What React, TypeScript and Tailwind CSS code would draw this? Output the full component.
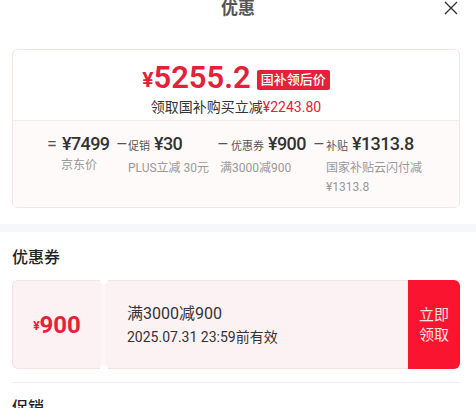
const font = "font-['Roboto','Noto_Sans_CJK_SC',sans-serif]";

const Breakdown = () => (
  <div className="flex bg-[#fffafa] pl-[34px] pt-[11px] pb-[10px]">
    {/* 京东价 */}
    <div className="flex w-[69px] flex-col">
      <div className="flex items-baseline leading-[24px]">
        <span className="w-[15px] text-[18px] text-[#555]">=</span>
        <span className="text-[18px] font-medium tracking-[-0.6px] text-[#333]">¥7499</span>
      </div>
      <span className="ml-[14px] text-[12px] leading-[19px] text-[#999]">京东价</span>
    </div>
    {/* 促销 */}
    <div className="flex w-[101px] flex-col">
      <div className="flex items-baseline leading-[24px]">
        <span className="w-[12px] text-[18px] text-[#555]">–</span>
        <span className="mr-[4px] text-[11px] text-[#555]">促销</span>
        <span className="text-[18px] font-medium tracking-[-0.6px] text-[#333]">¥30</span>
      </div>
      <span className="ml-[12px] text-[12px] leading-[19px] text-[#999]">PLUS立减 30元</span>
    </div>
    {/* 优惠券 */}
    <div className="flex w-[96px] flex-col">
      <div className="flex items-baseline leading-[24px]">
        <span className="w-[14px] text-[18px] text-[#555]">–</span>
        <span className="mr-[4px] text-[11px] text-[#555]">优惠券</span>
        <span className="text-[18px] font-medium tracking-[-0.6px] text-[#333]">¥900</span>
      </div>
      <span className="ml-[3px] text-[12px] leading-[19px] text-[#999]">满3000减900</span>
    </div>
    {/* 补贴 */}
    <div className="flex flex-1 flex-col">
      <div className="flex items-baseline leading-[24px]">
        <span className="w-[13px] text-[18px] text-[#555]">–</span>
        <span className="mr-[4px] text-[11px] text-[#555]">补贴</span>
        <span className="text-[18px] font-medium tracking-[-0.6px] text-[#333]">¥1313.8</span>
      </div>
      <span className="ml-[13px] w-[100px] text-[12px] leading-[19px] text-[#999]">国家补贴云闪付减¥1313.8</span>
    </div>
  </div>
);

const CouponCard = () => (
  <div className="relative flex h-[89px]">
    <div className="flex w-[89px] items-center justify-center rounded-l-[6px] border border-r-0 border-[#f6e4e4] bg-[#fdf2f3] text-[#e4213a]">
      <span className="mt-[3px] text-[12px] font-bold">¥</span>
      <span className="text-[24px] font-bold leading-none">900</span>
    </div>
    <div className="w-[4px] border-y border-[#f8eaea] bg-[#fdf7f8]" />
    <div className="flex flex-1 flex-col justify-center border border-l-0 border-r-0 border-[#f6e4e4] bg-[#fdf2f3] pl-[22px]">
      <span className="text-[16px] leading-[22px] text-[#333]">满3000减900</span>
      <span className="mt-[2px] text-[14px] leading-[20px] text-[#333]">2025.07.31 23:59前有效</span>
    </div>
    <div className="flex w-[52px] items-center justify-center rounded-r-[6px] bg-[#fa1430] text-center text-[15px] leading-[20px] text-[#ffe4e4]">
      立即
      <br />
      领取
    </div>
    <span className="absolute left-[88px] top-[-4px] h-[8px] w-[8px] rounded-full bg-white" />
    <span className="absolute bottom-[-4px] left-[88px] h-[8px] w-[8px] rounded-full bg-white" />
  </div>
);

export default function App() {
  return (
    <div className={`${font} h-[408px] w-[476px] overflow-hidden bg-white`}>
      {/* Header */}
      <div className="relative flex h-[16px] items-center justify-center">
        <span className="text-[17px] font-bold leading-[16px] text-[#555]">优惠</span>
        <svg
          className="absolute right-[18px] top-[1px] h-[14px] w-[14px] text-[#333]"
          viewBox="0 0 14 14"
          fill="none"
          stroke="currentColor"
          strokeWidth={1.4}
        >
          <path d="M1 1 13 13M13 1 1 13" />
        </svg>
      </div>

      {/* Price summary */}
      <div className="pl-[12px] pr-[16px] pt-[33px] pb-[16px]">
        <div className="overflow-hidden rounded-[6px] border border-[#f6e3e4]">
          <div className="flex h-[71px] flex-col items-center border-b border-[#f8eaea] pt-[9px]">
            <div className="flex items-center">
              <span className="mt-[6px] text-[21px] font-bold text-[#e4213a]">¥</span>
              <span className="text-[31px] font-semibold leading-[36px] text-[#e4213a]">5255.2</span>
              <span className="ml-[6px] mt-[4px] rounded-[2px] bg-[#e4213a] px-[4px] text-[13px] font-medium leading-[20px] text-white">国补领后价</span>
            </div>
            <div className="mt-[1px] text-[14px] leading-[18px] text-[#333]">
              领取国补购买立减<span className="text-[#e4213a]">¥2243.80</span>
            </div>
          </div>
          <Breakdown />
        </div>
      </div>

      <div className="h-[8px] bg-[#f6f7fa]" />

      {/* Coupons */}
      <div className="pl-[12px] pr-[16px]">
        <div className="pt-[16px] pb-[12px] text-[16px] font-medium leading-[20px] text-[#222]">优惠券</div>
        <CouponCard />
        <div className="mt-[13px] h-px bg-[#eeeeee]" />
        <div className="pt-[15px] text-[16px] font-medium leading-[20px] text-[#222]">促销</div>
      </div>
    </div>
  );
}
